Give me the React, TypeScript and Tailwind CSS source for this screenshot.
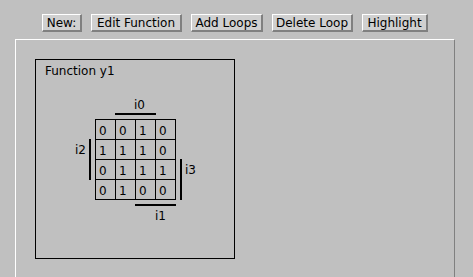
const buttons = [
  { label: "New:", w: "w-[40px]" },
  { label: "Edit Function", w: "w-[91px]" },
  { label: "Add Loops", w: "w-[72px]" },
  { label: "Delete Loop", w: "w-[81px]" },
  { label: "Highlight", w: "w-[66px]" },
];

const cells = [
  [0, 0, 1, 0],
  [1, 1, 1, 0],
  [0, 1, 1, 1],
  [0, 1, 0, 0],
];

function KMap() {
  return (
    <div className="ml-[39px] mt-[22px] grid grid-cols-[20px_81px_auto] grid-rows-[20px_81px_auto]">
      <div />
      {/* i0 over columns 3-4 */}
      <div className="flex flex-col">
        <span className="ml-[39px] leading-[12px]">i0</span>
        <div className="ml-[20px] mt-[2px] w-[41px] h-[2px] bg-black" />
      </div>
      <div />

      {/* i2 beside rows 2-3 */}
      <div className="flex items-start">
        <span className="w-[14px] pt-[25px] leading-[12px]">i2</span>
        <div className="mt-[20px] w-[2px] h-[41px] bg-black" />
      </div>

      {/* cell grid */}
      <div className="grid grid-cols-4 gap-px bg-black p-px w-[81px] h-[81px]">
        {cells.flat().map((v, i) => (
          <div key={i} className="w-[19px] h-[19px] bg-[#c0c0c0] pl-[3px] pt-[5px] leading-[12px]">
            {v}
          </div>
        ))}
      </div>

      {/* i3 beside rows 3-4 */}
      <div className="flex items-start gap-[3px] pl-[4px]">
        <div className="mt-[40px] w-[2px] h-[41px] bg-black" />
        <span className="pt-[45px] leading-[12px]">i3</span>
      </div>

      <div />
      {/* i1 under columns 2-3 */}
      <div className="flex flex-col pt-[4px]">
        <div className="ml-[40px] w-[41px] h-[2px] bg-black" />
        <span className="ml-[60px] mt-[4px] leading-[12px]">i1</span>
      </div>
      <div />
    </div>
  );
}

export default function App() {
  return (
    <div
      className="w-[473px] h-[277px] overflow-hidden bg-[#c0c0c0] text-black text-[12px]"
      style={{ fontFamily: '"DejaVu Sans", sans-serif' }}
    >
      {/* toolbar */}
      <div className="flex gap-[9px] pl-[42px] pt-[14px]">
        {buttons.map((b) => (
          <button
            key={b.label}
            className={`${b.w} h-[18px] flex items-center justify-center bg-[#d0d0d0] border-t border-l border-white border-b-2 border-r-2 border-b-[#808080] border-r-[#808080] leading-[16px]`}
          >
            {b.label}
          </button>
        ))}
      </div>
      {/* main panel */}
      <div className="ml-[15px] mt-[7px] w-[440px] h-[238px] border-t border-l border-white border-r border-r-[#808080]">
        <div className="ml-[19px] mt-[19px] w-[200px] h-[200px] border border-black">
          <div className="pl-[9px] pt-[5px] leading-[12px]">Function y1</div>
          <KMap />
        </div>
      </div>
    </div>
  );
}
